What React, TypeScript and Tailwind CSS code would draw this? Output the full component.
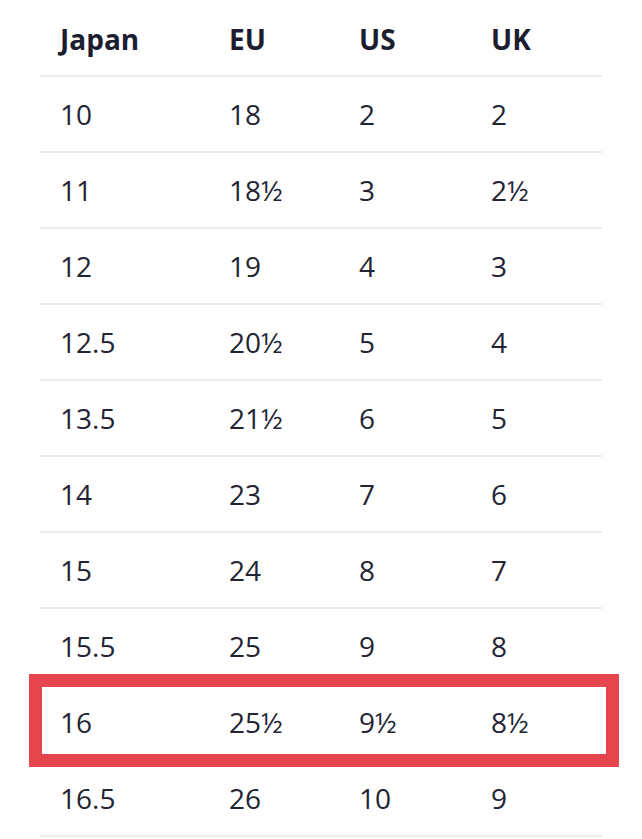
import React from "react";

const rows: [string, string, string, string][] = [
  ["10", "18", "2", "2"],
  ["11", "18½", "3", "2½"],
  ["12", "19", "4", "3"],
  ["12.5", "20½", "5", "4"],
  ["13.5", "21½", "6", "5"],
  ["14", "23", "7", "6"],
  ["15", "24", "8", "7"],
  ["15.5", "25", "9", "8"],
  ["16", "25½", "9½", "8½"],
  ["16.5", "26", "10", "9"],
];

export default function App() {
  return (
    <div
      className="relative w-[642px] h-[839px] overflow-hidden bg-white"
      style={{ fontFamily: '"Open Sans", sans-serif' }}
    >
      <div className="ml-[40px] w-[562px]">
        <div className="grid grid-cols-[169px_130px_132px_1fr] h-[77px] items-center pl-[20px] border-b-2 border-[#ececec] text-[28px] font-bold text-[#1c1d2e] pt-[2px]">
          <div>Japan</div>
          <div>EU</div>
          <div>US</div>
          <div>UK</div>
        </div>
        {rows.map((r, i) => (
          <div
            key={i}
            className="grid grid-cols-[169px_130px_132px_1fr] h-[76px] items-center pl-[20px] border-b-2 border-[#ececec] text-[28px] text-[#232433]"
          >
            <div>{r[0]}</div>
            <div>{r[1]}</div>
            <div>{r[2]}</div>
            <div>{r[3]}</div>
          </div>
        ))}
      </div>
      <div className="absolute left-[29px] top-[674px] w-[590px] h-[93px] border-[13px] border-[#e5464e]" />
    </div>
  );
}
